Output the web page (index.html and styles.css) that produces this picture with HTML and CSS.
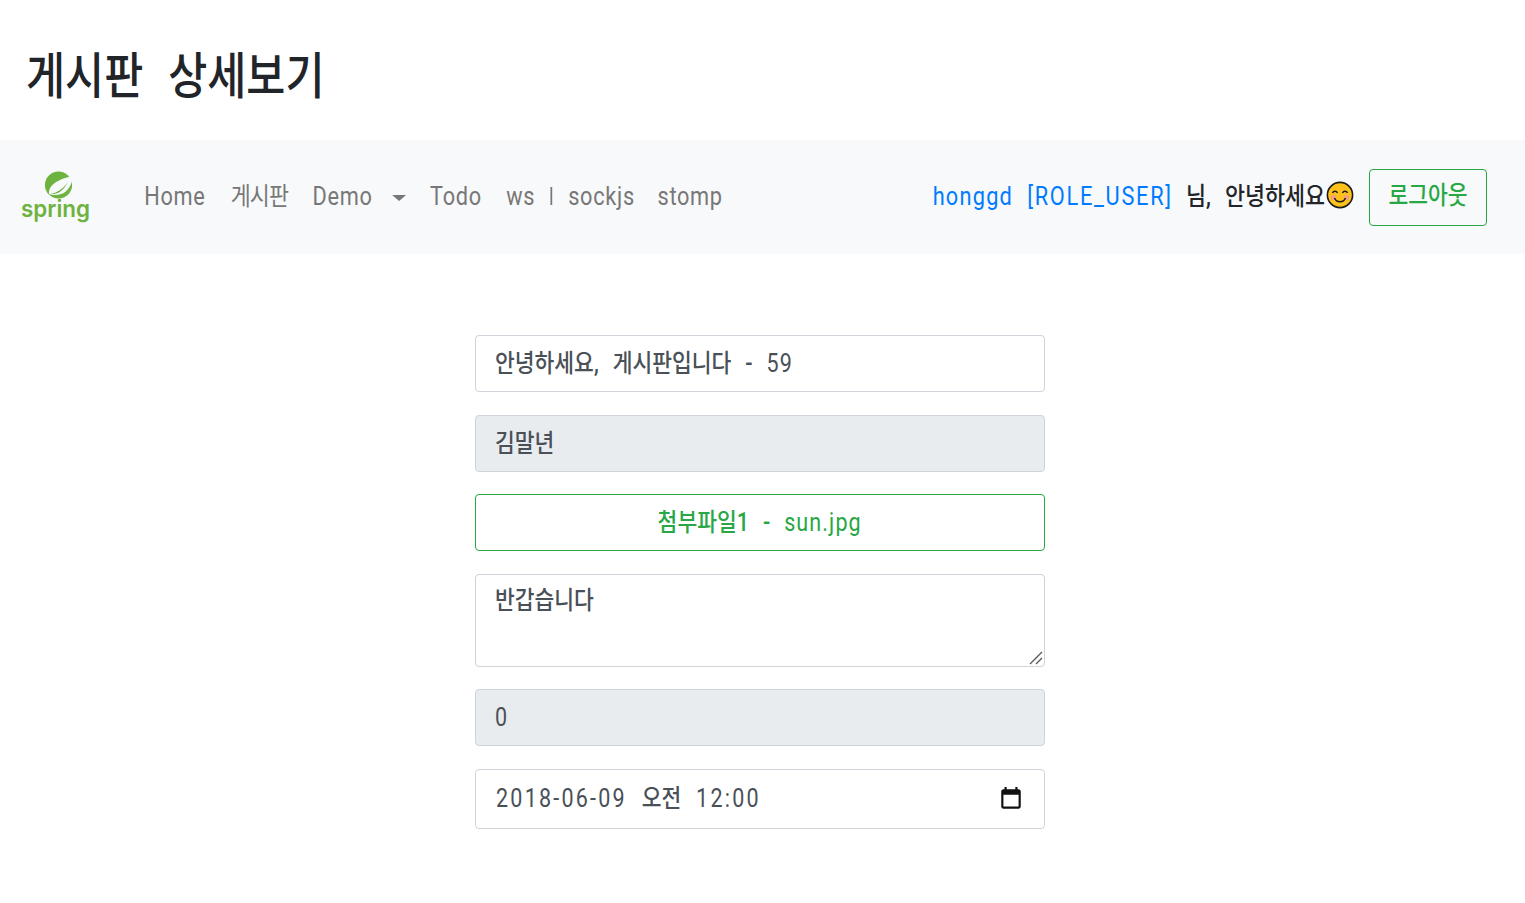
FILE: index.html
```html
<!DOCTYPE html>
<html>
    <head>
        <title>게시판 상세보기</title>
        <link rel="stylesheet" href="styles.css">
    </head>
    <body>
      <header class="title">
        <h1>게시판 상세보기</h1>
      </header>
      <nav class="navbar">
        <a class="logo" href="#">
          <svg width="80" height="60" viewBox="0 0 80 60">
            <circle cx="38.5" cy="18" r="13.6" fill="#6db33f"/>
            <path d="M29 27C28 18 38 12 53 9C52 19 46 28 36 28C33 28 31 28 29 27z" fill="#f8f9fa"/>
            <path d="M30 27c7-1 13-5 18-12-4 8-10 13-18 12z" fill="#6db33f"/>
            <text x="1" y="50" textLength="69" lengthAdjust="spacingAndGlyphs" class="logo-text">spring</text>
          </svg>
        </a>
        <ul class="menu">
          <li><a href="#">Home</a></li>
          <li><a href="#" class="ko">게시판</a></li>
          <li><a href="#" class="dropdown">Demo</a></li>
          <li><a href="#">Todo</a></li>
          <li><a href="#">ws</a><span class="sep"></span><a href="#">sockjs</a></li>
          <li><a href="#">stomp</a></li>
        </ul>
        <div class="user">
          <div class="user-text">
            <a href="#" class="user-link"><span class="user-name">honggd</span> [ROLE_USER]</a>
            <span class="hello">님, 안녕하세요</span>
          </div>
          <svg class="smile" width="28" height="28" viewBox="0 0 28 28">
            <circle cx="14" cy="14" r="12.6" fill="#fcc21b" stroke="#1b1b1b" stroke-width="1.6"/>
            <circle cx="7.5" cy="16.5" r="2.8" fill="#f5a07a"/>
            <circle cx="20.5" cy="16.5" r="2.8" fill="#f5a07a"/>
            <path d="M6.5 12c1-2.4 4-2.4 5 0M16.5 12c1-2.4 4-2.4 5 0" fill="none" stroke="#1b1b1b" stroke-width="1.5"/>
            <path d="M8.5 17c2 5 9 5 11 0" fill="none" stroke="#1b1b1b" stroke-width="1.5"/>
          </svg>
          <button class="btn-logout"><span class="narrow center">로그아웃</span></button>
        </div>
      </nav>
      <section class="board">
        <div class="field"><span class="narrow">안녕하세요, 게시판입니다 - <span class="latin">59</span></span></div>
        <div class="field readonly tight"><span class="narrow">김말년</span></div>
        <button class="btn-file"><span class="narrow center">첨부파일1 - <span class="latin">sun.jpg</span></span></button>
        <div class="field area tight"><span class="narrow">반갑습니다</span>
          <svg class="grip" width="14" height="14" viewBox="0 0 14 14">
            <path d="M1 13L13 1M7 13l6-6" stroke="#555" stroke-width="1.3" fill="none"/>
          </svg>
        </div>
        <div class="field readonly"><span class="narrow"><span class="latin">0</span></span></div>
        <div class="field date">
          <span class="narrow"><span class="digits">2018-06-09</span> 오전 <span class="digits">12:00</span></span>
          <svg width="26" height="26" viewBox="0 0 24 24">
            <path d="M19 3h-1V1h-2v2H8V1H6v2H5c-1.1 0-2 .9-2 2v14c0 1.1.9 2 2 2h14c1.1 0 2-.9 2-2V5c0-1.1-.9-2-2-2zm0 16H5V8h14v11z" fill="#111"/>
          </svg>
        </div>
      </section>
    </body>
</html>
```

FILE: styles.css
```css
* {
  box-sizing: border-box;
}

body {
  margin: 0;
  font-family: "Roboto", "Noto Sans CJK KR", sans-serif;
  color: #212529;
  background: #fff;
}

a {
  text-decoration: none;
}

/* The original font is condensed, so text gets squeezed sideways */
.narrow {
  display: inline-block;
  transform: scaleX(0.86);
  transform-origin: left center;
  font-weight: 500;
  word-spacing: 10px;
  white-space: nowrap;
}

.center {
  transform-origin: center;
}

.latin {
  font-weight: 400;
  letter-spacing: 1.3px;
}

.digits {
  font-weight: 400;
  letter-spacing: 2.6px;
}

/* Page title */
.title {
  height: 140px;
  padding: 42px 26px 0;
}

.title h1 {
  margin: 0;
  font-size: 50px;
  line-height: 60px;
  font-weight: 500;
  font-family: "Noto Sans CJK KR", sans-serif;
  word-spacing: 18px;
  transform: scaleX(0.85);
  transform-origin: left center;
}

/* Navbar */
.navbar {
  display: flex;
  align-items: center;
  height: 114px;
  padding: 0 38px 0 20px;
  background: #f8f9fa;
}

.logo {
  display: block;
  width: 80px;
  height: 60px;
  margin-right: 32px;
}

.logo-text {
  font-family: "Inter", sans-serif;
  font-size: 24px;
  font-weight: 600;
  fill: #6db33f;
}

.menu {
  display: flex;
  margin: 0;
  padding: 0;
  list-style: none;
  font-size: 25px;
  line-height: 30px;
  letter-spacing: 0.8px;
  transform: scaleX(0.87);
  transform-origin: left center;
}

.menu li {
  padding: 0 14px;
}

.menu li:last-child {
  margin-left: -2px;
}

.menu a {
  color: #777;
}

.menu .ko {
  margin-left: 1px;
  letter-spacing: -1px;
}

.dropdown::after {
  content: "";
  display: inline-block;
  margin-left: 22px;
  vertical-align: 4px;
  border-top: 6px solid #777;
  border-left: 8px solid transparent;
  border-right: 8px solid transparent;
}

.sep {
  display: inline-block;
  width: 2px;
  height: 18px;
  margin: 0 18px;
  background: #777;
}

.user {
  display: flex;
  align-items: center;
  margin-left: auto;
  font-size: 25px;
  line-height: 30px;
}

.user-text {
  word-spacing: 10px;
  white-space: nowrap;
  transform: scaleX(0.87);
  transform-origin: right center;
}

.user-link {
  color: #007bff;
  margin-right: -1px;
  letter-spacing: 2px;
  word-spacing: 8px;
}

.user-name {
  letter-spacing: 1.4px;
}

.hello {
  color: #212529;
  font-weight: 500;
}

.smile {
  margin: 0 15px 4px 1px;
}

.btn-logout {
  width: 118px;
  height: 57px;
  padding: 0 0 2px;
  font: inherit;
  color: #28a745;
  background: transparent;
  border: 1px solid #28a745;
  border-radius: 4px;
}

/* Form */
.board {
  display: flex;
  flex-direction: column;
  width: 570px;
  margin: 81px 0 0 475px;
  font-size: 25px;
  line-height: 30px;
}

.field {
  position: relative;
  display: flex;
  align-items: center;
  flex-shrink: 0;
  height: 57px;
  margin-bottom: 23px;
  padding: 0 19px;
  color: #495057;
  background: #fff;
  border: 1px solid #ced4da;
  border-radius: 4px;
}

.tight {
  margin-bottom: 22px;
}

.readonly {
  background: #e9ecef;
}

.btn-file {
  height: 57px;
  margin-bottom: 23px;
  padding: 0;
  font: inherit;
  color: #28a745;
  background: #fff;
  border: 1px solid #28a745;
  border-radius: 4px;
}

.area {
  align-items: flex-start;
  height: 93px;
  padding-top: 11px;
}

.grip {
  position: absolute;
  right: 1px;
  bottom: 1px;
}

.date {
  justify-content: space-between;
  height: 60px;
  padding: 0 20px;
  margin-bottom: 0;
}

.date .narrow {
  word-spacing: 11px;
}
```
